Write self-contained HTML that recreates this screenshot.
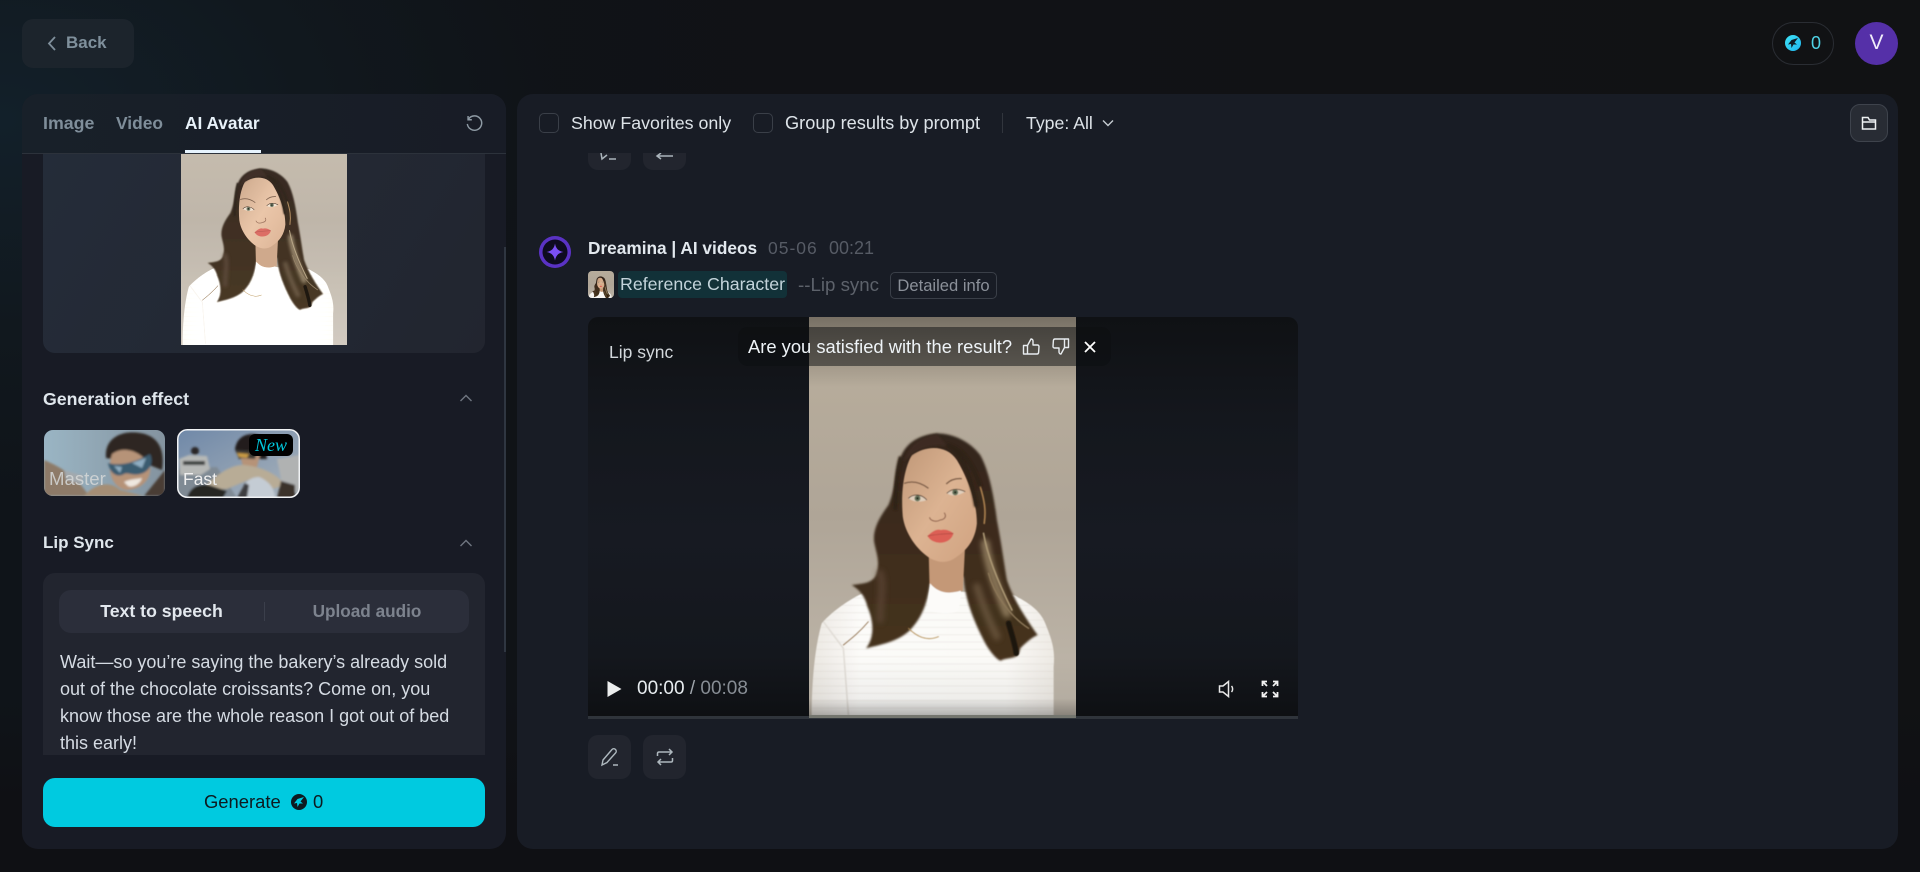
<!DOCTYPE html>
<html><head><meta charset="utf-8"><style>
*{box-sizing:border-box;margin:0;padding:0}
html,body{width:1920px;height:872px;overflow:hidden;background:#0f1014}
body{position:relative;font-family:"Liberation Sans",sans-serif;color:#e6edf2}
.a{position:absolute}
.t{position:absolute;white-space:nowrap;line-height:20px}
svg{display:block}
</style></head><body>
<svg width="0" height="0" style="position:absolute"><defs>
<linearGradient id="bgG" x1="0" y1="0" x2="0" y2="1"><stop offset="0" stop-color="#baaf9d"/><stop offset=".5" stop-color="#afa597"/><stop offset="1" stop-color="#c0b8ac"/></linearGradient>
<linearGradient id="skin" x1="0" y1="0" x2="1" y2="1"><stop offset="0" stop-color="#c09878"/><stop offset=".5" stop-color="#dcb392"/><stop offset="1" stop-color="#d0a280"/></linearGradient>
<linearGradient id="swt" x1="0" y1="0" x2="1" y2="0"><stop offset="0" stop-color="#ece8e2"/><stop offset=".2" stop-color="#fcfbf9"/><stop offset=".8" stop-color="#fbfaf7"/><stop offset="1" stop-color="#eeeae4"/></linearGradient>
<linearGradient id="hairG" x1="0" y1="0" x2="0" y2="1"><stop offset="0" stop-color="#33251b"/><stop offset=".55" stop-color="#3f2d1e"/><stop offset="1" stop-color="#46331f"/></linearGradient>
<pattern id="rib" width="10" height="22" patternUnits="userSpaceOnUse"><rect y="19" width="10" height="2" fill="#cfcac3" opacity=".4"/></pattern>
<filter id="bH"><feGaussianBlur stdDeviation="3.500"/></filter>
<filter id="bS"><feGaussianBlur stdDeviation="8"/></filter>
<filter id="bF"><feGaussianBlur stdDeviation="1.500"/></filter>
<symbol id="portrait" viewBox="87 -9 800 1200" preserveAspectRatio="none">
<rect x="87" y="-9" width="800" height="1200" fill="url(#bgG)"/>
<g filter="url(#bF)">
<path d="M125 910C160 870 220 830 260 815L445 790 540 815 700 825C740 845 780 870 795 910 815 960 825 990 820 1040V1191H95C95 1080 105 980 125 910Z" fill="url(#swt)"/>
<path d="M125 910C160 870 220 830 260 815L445 790 540 815 700 825C740 845 780 870 795 910 815 960 825 990 820 1040V1191H95C95 1080 105 980 125 910Z" fill="url(#rib)"/>
<path d="M130 905L190 985 205 1185" fill="none" stroke="#e2ded8" stroke-width="5"/>
</g>
<g filter="url(#bH)">
<path d="M470 340C420 345 380 365 362 410 345 460 345 510 325 555 300 590 278 625 282 665 288 700 300 720 290 760 280 790 250 790 215 795 240 810 255 830 262 860 280 900 285 950 258 985 300 975 350 965 385 935 420 900 440 860 450 790L550 770C555 830 570 880 610 960 630 1000 660 1030 665 1020 690 1010 715 1020 720 985 745 960 760 950 772 945 740 900 700 840 680 780 670 720 665 680 650 600 640 520 625 450 600 405 570 365 520 340 470 340Z" fill="url(#hairG)"/>
</g>
<g fill="none" stroke-linecap="round" filter="url(#bS)" opacity=".75">
<path d="M615 670C625 740 650 810 680 880" stroke="#a08c6c" stroke-width="26"/>
<path d="M590 800C605 850 625 900 650 950" stroke="#6e5a42" stroke-width="22"/>
<path d="M300 760C312 800 300 840 300 900" stroke="#5c4534" stroke-width="22"/>
</g>
<g fill="none" stroke-linecap="round" filter="url(#bF)">
<path d="M610 640C620 700 650 780 695 870" stroke="#ab9773" stroke-width="5"/>
<path d="M625 760C640 820 690 890 745 925" stroke="#8d7859" stroke-width="4"/>
<path d="M600 500C612 540 618 570 612 610" stroke="#a97f4e" stroke-width="5"/>
<path d="M685 910C695 945 705 975 708 1000" stroke="#1e130c" stroke-width="16"/>
<path d="M190 975C215 955 240 935 265 905" stroke="#8a6a46" stroke-width="2.500"/>
<path d="M385 925C410 950 440 965 475 950" stroke="#b08a50" stroke-width="2.500"/>
</g>
<g filter="url(#bF)">
<path d="M445 670L448 795C470 825 520 825 548 812L555 670Z" fill="#c49877"/>
<path d="M450 790C445 830 440 860 445 870 480 885 530 880 535 870 540 850 542 830 542 812 500 825 470 815 450 790Z" fill="#fcfbf9"/>
<path d="M395 405C440 375 500 375 530 420 560 470 590 540 590 610 585 660 560 690 530 710 505 730 480 730 450 715 410 690 375 640 368 590 362 520 370 450 395 405Z" fill="url(#skin)"/>
<path d="M372 490C395 482 420 486 445 505M498 492C510 480 525 474 545 476" fill="none" stroke="#7a5a44" stroke-width="4"/>
<path d="M385 535C400 522 425 525 440 540 420 548 400 546 385 535ZM500 520C515 508 535 508 555 515 535 528 515 530 500 520Z" fill="#e0cfbc"/>
<circle cx="412" cy="535" r="9" fill="#66745c"/><circle cx="525" cy="517" r="9" fill="#66745c"/>
<circle cx="412" cy="535" r="3.500" fill="#1f1a14"/><circle cx="525" cy="517" r="3.500" fill="#1f1a14"/>
<path d="M385 535C400 520 425 522 440 540M500 520C515 505 535 505 555 515" fill="none" stroke="#3a2a20" stroke-width="2.500"/>
<path d="M448 592C452 605 470 606 480 600 495 598 500 588 492 578" fill="none" stroke="#8a5c46" stroke-width="3"/>
<path d="M442 648C458 632 472 626 482 630 495 626 510 632 520 640 515 660 495 670 475 668 458 666 448 658 442 648Z" fill="#dc5f55"/>
<path d="M442 648C470 642 495 642 520 640" fill="none" stroke="#9a4038" stroke-width="1.500"/>
</g>
<g filter="url(#bH)">
<path d="M362 410C345 470 350 520 345 570M600 500C580 440 550 385 500 375 550 400 575 480 588 560" fill="none" stroke="#2f2118" stroke-width="12"/>
<path d="M470 342C420 350 385 375 372 425 410 385 450 372 500 378 485 360 480 350 470 342Z" fill="#3d2c21"/>
</g>
</symbol>
<linearGradient id="cy" x1="0" y1="0" x2="1" y2="1"><stop offset="0" stop-color="#3fe3f5"/><stop offset="1" stop-color="#1fb5f0"/></linearGradient>
<filter id="b1"><feGaussianBlur stdDeviation="1"/></filter>
</defs></svg>

<!-- page bg -->
<div class="a" style="inset:0;background:radial-gradient(ellipse 560px 380px at 0 120px,#12202a 0,#11181e 55%,rgba(15,16,20,0) 100%),linear-gradient(90deg,#0f1419 0,#111216 45%,#111214 100%)"></div>
<div class="a" style="left:0;top:700px;width:1920px;height:172px;background:linear-gradient(180deg,rgba(15,16,20,0),#0f1014 60%)"></div>

<!-- top -->
<div class="a" style="left:22px;top:19px;width:112px;height:49px;border-radius:11px;background:#1c242c"></div>
<svg class="a" style="left:46px;top:34px" width="12" height="18" viewBox="0 0 12 18"><path d="M9 3L3 9.500 9 16" fill="none" stroke="#7f8f9b" stroke-width="1.800"/></svg>
<div class="t" style="left:66px;top:33px;font-size:17px;font-weight:700;color:#7f909c">Back</div>

<div class="a" style="left:1772px;top:22px;width:62px;height:43px;border-radius:22px;border:1px solid #2a2d33"></div>
<svg class="a" style="left:1785px;top:35px" width="16" height="16" viewBox="0 0 16 16"><circle cx="8" cy="8" r="8" fill="url(#cy)"/><path d="M13 3L6.500 5 3 9.500 6 9 6.500 13 8.500 9.500 12 9.500 9.500 7.500Z" fill="#0f1a24"/></svg>
<div class="t" style="left:1811px;top:33px;font-size:18px;color:#4fd3e6">0</div>
<div class="a" style="left:1855px;top:22px;width:43px;height:43px;border-radius:50%;background:#5530a8"></div>
<div class="t" style="left:1855px;top:33px;width:43px;text-align:center;font-size:21px;color:#f0ecfa">V</div>

<!-- left panel -->
<div class="a" style="left:22px;top:94px;width:484px;height:755px;border-radius:16px;background:#181b25;overflow:hidden">
  <div class="a" style="left:0;top:0;width:484px;height:60px;background:linear-gradient(90deg,#182029,#181c26);border-bottom:1px solid #2c323b"></div>
</div>
<div class="t" style="left:43px;top:113px;font-size:17.800px;font-weight:700;color:#7f8e9a">Image</div>
<div class="t" style="left:116px;top:113px;font-size:17.400px;font-weight:700;color:#7f8e9a">Video</div>
<div class="t" style="left:185px;top:113px;font-size:17.300px;font-weight:700;color:#e8f2fa">AI Avatar</div>
<div class="a" style="left:185px;top:150px;width:76px;height:3px;background:#e6f3fd"></div>
<svg class="a" style="left:465px;top:114px" width="18" height="18" viewBox="0 0 20 20"><path d="M4 5.500A8 8 0 1 1 2.600 11" fill="none" stroke="#8e9aa4" stroke-width="1.600"/><path d="M3.400 2.200V6.400H7.600" fill="none" stroke="#8e9aa4" stroke-width="1.600"/></svg>

<div class="a" style="left:43px;top:154px;width:442px;height:199px;border-radius:0 0 12px 12px;background:linear-gradient(120deg,#242c39,#22252f)"></div>
<div class="a" style="left:181px;top:154px;width:166px;height:191px;overflow:hidden"><svg class="a" style="left:0;top:-58px;filter:brightness(1.1) saturate(.8)" width="166" height="249"><use href="#portrait" width="166" height="249"/></svg></div>
<div class="a" style="left:504px;top:247px;width:2px;height:405px;background:#2f3641"></div>

<div class="t" style="left:43px;top:389px;font-size:17.750px;font-weight:700;color:#dfe6ec">Generation effect</div>
<svg class="a" style="left:459px;top:392px" width="14" height="12" viewBox="0 0 14 12"><path d="M1.500 9L7 3.500 12.500 9" fill="none" stroke="#6f7680" stroke-width="1.400"/></svg>

<!-- Master thumb -->
<svg class="a" style="left:44px;top:430px;border-radius:9px" width="121" height="66" viewBox="0 0 121 66">
<defs><linearGradient id="sky1" x1="0" y1="0" x2="1" y2="0"><stop offset="0" stop-color="#9ab5c4"/><stop offset="1" stop-color="#84939f"/></linearGradient></defs>
<rect width="121" height="66" fill="url(#sky1)"/>
<g filter="url(#b1)">
<path d="M0 30C20 38 35 50 45 66H0Z" fill="#8d7a68"/><path d="M20 40L40 46 36 54 22 50Z" fill="#a3a9ad"/>
<path d="M100 66L121 40V66Z" fill="#4a3d35"/>
<path d="M62 28C60 8 78 0 96 3 115 6 121 20 118 40L108 36Z" fill="#2e2622"/>
<path d="M68 24C82 14 100 24 106 36 108 50 96 60 82 60 70 58 62 44 68 24Z" fill="#b69378"/>
<path d="M64 33C75 36 88 34 106 24 110 32 106 42 96 44 88 46 84 42 80 44 74 48 66 44 64 33Z" fill="#3b5b70"/>
<path d="M70 36L78 37 76 43ZM88 33L102 28 98 38Z" fill="#90aec2"/>
<path d="M80 52C86 49 94 49 98 48 96 55 88 58 84 56Z" fill="#efe8e0"/>
<path d="M40 66C50 54 66 50 76 60L100 66Z" fill="#a58e74"/>
</g></svg>
<div class="t" style="left:49px;top:469px;font-size:18.600px;color:#d6d8d8;opacity:.85">Master</div>

<!-- Fast thumb -->
<svg class="a" style="left:177px;top:429px" width="123" height="69" viewBox="0 0 123 69">
<defs><clipPath id="cf"><rect x="1" y="1" width="121" height="67" rx="9"/></clipPath><linearGradient id="sky2" x1="0" y1="0" x2="1" y2="1"><stop offset="0" stop-color="#6f88a8"/><stop offset="1" stop-color="#a9b3bb"/></linearGradient></defs>
<g clip-path="url(#cf)"><rect width="123" height="69" fill="url(#sky2)"/>
<g filter="url(#b1)">
<path d="M0 40L40 38 60 69H0Z" fill="#7f8a94"/><path d="M100 30L123 26V60L108 69Z" fill="#b0b2b2"/>
<path d="M2 30L12 26 30 27 33 40 24 46H3Z" fill="#b6b8b6"/><path d="M6 32H28V36H6Z" fill="#3a3c3e"/><circle cx="18" cy="22" r="4" fill="#2a2826"/>
<path d="M58 20C60 5 75 2 86 8L90 30 62 30Z" fill="#241e1a"/>
<path d="M62 22H84L80 38H66Z" fill="#b69378"/><path d="M58 21L80 22 78 30 62 29Z" fill="#3d3a34"/><path d="M60 24L72 25 70 29 62 28Z" fill="#c99b45"/>
<path d="M25 60C40 45 55 35 68 36 85 38 100 45 108 56L95 60 74 50 50 60Z" fill="#b8ac96"/>
<path d="M62 69C64 56 72 48 82 48 92 52 98 60 98 69Z" fill="#c4ccd4"/>
<path d="M10 69C12 60 20 54 32 56L50 62 46 69Z" fill="#282624"/><path d="M100 69L104 52 118 56 118 69Z" fill="#3a322c"/>
<path d="M60 69L68 54 72 56 70 69Z" fill="#3e3e40"/>
</g></g>
<rect x=".75" y=".75" width="121.500" height="67.500" rx="9.500" fill="none" stroke="#f0f2f4" stroke-width="1.500"/>
</svg>
<div class="a" style="left:249px;top:434px;width:44px;height:22px;border-radius:6px;background:#000"></div>
<div class="t" style="left:249px;top:435px;width:44px;text-align:center;font-family:'Liberation Serif',serif;font-style:italic;font-size:18px;color:#00c7dc">New</div>
<div class="t" style="left:183px;top:469px;font-size:17.500px;color:#f0f0f0">Fast</div>

<div class="t" style="left:43px;top:533px;font-size:17px;font-weight:700;color:#dfe6ec">Lip Sync</div>
<svg class="a" style="left:459px;top:537px" width="14" height="12" viewBox="0 0 14 12"><path d="M1.500 9L7 3.500 12.500 9" fill="none" stroke="#6f7680" stroke-width="1.400"/></svg>

<div class="a" style="left:43px;top:573px;width:442px;height:182px;border-radius:12px 12px 0 0;background:#22252f"></div>
<div class="a" style="left:59px;top:590px;width:410px;height:43px;border-radius:12px;background:#2b2e3a"></div>
<div class="a" style="left:264px;top:602px;width:1px;height:19px;background:#3b3f4b"></div>
<div class="t" style="left:59px;top:601px;width:205px;text-align:center;font-size:17.700px;font-weight:700;color:#e3e8ee">Text to speech</div>
<div class="t" style="left:265px;top:601px;width:204px;text-align:center;font-size:17.200px;font-weight:700;color:#7d838e">Upload audio</div>
<div class="t" style="left:60px;top:649px;font-size:18px;line-height:27px;color:#d5dbe3;white-space:nowrap">Wait—so you’re saying the bakery’s already sold<br>out of the chocolate croissants? Come on, you<br>know those are the whole reason I got out of bed<br>this early!</div>

<div class="a" style="left:43px;top:778px;width:442px;height:49px;border-radius:12px;background:#00cae0"></div>
<div class="t" style="left:204px;top:792px;font-size:18.400px;color:#0d1a20">Generate</div>
<svg class="a" style="left:291px;top:794px" width="16" height="16" viewBox="0 0 16 16"><circle cx="8" cy="8" r="8" fill="#0d1a20"/><path d="M13 3L6.500 5 3 9.500 6 9 6.500 13 8.500 9.500 12 9.500 9.500 7.500Z" fill="#00cae0"/></svg>
<div class="t" style="left:313px;top:792px;font-size:18.400px;color:#0d1a20">0</div>

<!-- right panel -->
<div class="a" style="left:517px;top:94px;width:1381px;height:755px;border-radius:16px;background:#181c25"></div>
<div class="a" style="left:588px;top:153px;width:43px;height:17px;border-radius:0 0 10px 10px;background:#22252e"></div>
<div class="a" style="left:643px;top:153px;width:43px;height:17px;border-radius:0 0 10px 10px;background:#22252e"></div>
<svg class="a" style="left:600px;top:153px" width="20" height="8" viewBox="0 0 20 8"><path d="M1 0L2 6 7 2M9 6H16" fill="none" stroke="#aab4bb" stroke-width="1.500"/></svg>
<svg class="a" style="left:655px;top:153px" width="20" height="8" viewBox="0 0 20 8"><path d="M6 0L2 3 6 6M2 3H18" fill="none" stroke="#aab4bb" stroke-width="1.500"/></svg>

<div class="a" style="left:539px;top:113px;width:20px;height:20px;border:1px solid #3a3f48;border-radius:5px"></div>
<div class="t" style="left:571px;top:113px;font-size:17.800px;color:#dde3e8">Show Favorites only</div>
<div class="a" style="left:753px;top:113px;width:20px;height:20px;border:1px solid #3a3f48;border-radius:5px"></div>
<div class="t" style="left:785px;top:113px;font-size:18.200px;color:#dde3e8">Group results by prompt</div>
<div class="a" style="left:1002px;top:113px;width:1px;height:20px;background:#31353d"></div>
<div class="t" style="left:1026px;top:113px;font-size:17.700px;color:#dde3e8">Type: All</div>
<svg class="a" style="left:1101px;top:118px" width="14" height="10" viewBox="0 0 14 10"><path d="M2 2.500L7 7.500 12 2.500" fill="none" stroke="#c5ccd2" stroke-width="1.400"/></svg>

<div class="a" style="left:1850px;top:104px;width:38px;height:38px;border-radius:10px;background:#282c34;border:1px solid #3e434c"></div>
<svg class="a" style="left:1860px;top:114px" width="18" height="18" viewBox="0 0 18 18"><path d="M2.500 15V3.500H8L9.500 6H15.500V15ZM2.500 8H15.500" fill="none" stroke="#eef1f3" stroke-width="1.500"/></svg>

<!-- message -->
<svg class="a" style="left:539px;top:236px" width="32" height="32" viewBox="0 0 32 32"><circle cx="16" cy="16" r="16" fill="#5a32c4"/><circle cx="16" cy="16" r="12.500" fill="#0e0b20"/><path d="M16 7.500C16.800 12.500 19.500 15.200 24.500 16 19.500 16.800 16.800 19.500 16 24.500 15.200 19.500 12.500 16.800 7.500 16 12.500 15.200 15.200 12.500 16 7.500Z" fill="#7b4ff5"/></svg>
<div class="t" style="left:588px;top:238px;font-size:17.250px;font-weight:700;color:#e2e8ee">Dreamina | AI videos</div>
<div class="t" style="left:768px;top:238px;font-size:17.500px;letter-spacing:1px;color:#565b65">05-06</div>
<div class="t" style="left:829px;top:238px;font-size:18px;color:#565b65">00:21</div>

<div class="a" style="left:588px;top:271px;width:26px;height:27px;border-radius:4px;overflow:hidden"><svg width="26" height="39" style="margin-top:-6px"><use href="#portrait" width="26" height="39"/></svg></div>
<div class="a" style="left:618px;top:271px;width:169px;height:27px;border-radius:4px;background:#123138"></div>
<div class="t" style="left:620px;top:274px;font-size:17.800px;color:#c3d3da">Reference Character</div>
<div class="t" style="left:798px;top:275px;font-size:18.700px;color:#5d626b">--Lip sync</div>
<div class="a" style="left:890px;top:272px;width:107px;height:27px;border:1px solid #3a3f48;border-radius:5px"></div>
<div class="t" style="left:890px;top:276px;width:107px;text-align:center;font-size:16.600px;color:#8b9099">Detailed info</div>

<!-- video -->
<div class="a" style="left:588px;top:317px;width:710px;height:399px;border-radius:10px 10px 0 0;overflow:hidden;background:linear-gradient(180deg,#0f1114 0,#14171d 25%,#171a22 55%,#14171d 85%,#0e1013 100%)">
  <svg class="a" style="left:221px;top:0" width="267" height="400"><use href="#portrait" width="267" height="400"/></svg>
  <div class="a" style="left:221px;top:0;width:267px;height:70px;background:linear-gradient(180deg,rgba(0,0,0,.36),rgba(0,0,0,0))"></div>
  <div class="a" style="left:221px;top:340px;width:267px;height:59px;background:linear-gradient(180deg,rgba(0,0,0,0) 0,rgba(0,0,0,.05) 70%,rgba(0,0,0,.3) 100%)"></div>
</div>
<div class="a" style="left:588px;top:716px;width:710px;height:3px;background:#2f343b"></div>
<div class="a" style="left:809px;top:715px;width:267px;height:3px;background:#74766f"></div>

<div class="t" style="left:609px;top:342px;font-size:17.500px;color:#d3d8dc">Lip sync</div>
<div class="a" style="left:738px;top:327px;width:373px;height:39px;border-radius:10px;background:rgba(12,13,16,.5)"></div>
<div class="t" style="left:748px;top:337px;font-size:18.350px;color:#eef3f7">Are you satisfied with the result?</div>
<svg class="a" style="left:1022px;top:337px" width="18" height="20" viewBox="0 0 18 20"><path d="M5.500 8.500V17H15C16 17 16.500 16.300 16.600 15.500L17 9.500C17 8.700 16.400 8 15.500 8H11V4C11 2.500 9.800 2 9 2L5.500 8.500ZM1.500 8.500H5.500V17H1.500Z" fill="none" stroke="#e8ecef" stroke-width="1.400" stroke-linejoin="round"/></svg>
<svg class="a" style="left:1052px;top:336px" width="18" height="20" viewBox="0 0 18 20"><path d="M12.500 11.500V3H3C2 3 1.500 3.700 1.400 4.500L1 10.500C1 11.300 1.600 12 2.500 12H7V16C7 17.500 8.200 18 9 18L12.500 11.500ZM16.500 11.500H12.500V3H16.500Z" fill="none" stroke="#e8ecef" stroke-width="1.400" stroke-linejoin="round"/></svg>
<svg class="a" style="left:1083px;top:340px" width="14" height="14" viewBox="0 0 14 14"><path d="M2 2L12 12M12 2L2 12" stroke="#fff" stroke-width="1.800"/></svg>

<svg class="a" style="left:607px;top:680px" width="15" height="18" viewBox="0 0 15 18"><path d="M0.500 1V17L14.500 9Z" fill="#eceeee"/></svg>
<div class="t" style="left:637px;top:679px;font-size:19px;color:#e8edf0">00:00 <span style="color:#a0a6ac">/</span> <span style="color:#878d94">00:08</span></div>
<svg class="a" style="left:1218px;top:680px" width="20" height="18" viewBox="0 0 20 18"><path d="M1.500 6H5L10.500 1.500V16.500L5 12H1.500ZM13.500 6C15 7.500 15 10.500 13.500 12" fill="none" stroke="#e8e8e8" stroke-width="1.500"/></svg>
<svg class="a" style="left:1261px;top:680px" width="18" height="18" viewBox="0 0 18 18"><path d="M1.500 6V1.500H6M2 2L6 6M12 1.500H16.500V6M16 2L12 6M1.500 12V16.500H6M2 16L6 12M16.500 12V16.500H12M16 16L12 12" fill="none" stroke="#f2f2f2" stroke-width="1.800"/></svg>

<div class="a" style="left:588px;top:735px;width:43px;height:44px;border-radius:10px;background:#22252e"></div>
<svg class="a" style="left:600px;top:747px" width="20" height="20" viewBox="0 0 20 20"><path d="M2 18L3 13 12 2.500C13 1.500 14.500 1.500 15.500 2.500 16.500 3.500 16.500 5 15.500 6L7 15.500ZM13 18H18" fill="none" stroke="#aeb8be" stroke-width="1.400"/></svg>
<div class="a" style="left:643px;top:735px;width:43px;height:44px;border-radius:10px;background:#22252e"></div>
<svg class="a" style="left:655px;top:747px" width="20" height="20" viewBox="0 0 20 20"><path d="M2.500 9V6.500C2.500 5.500 3.200 5 4 5H17M14 2L17 5 14 8M17.500 11V13.500C17.500 14.500 16.800 15 16 15H3M6 12L3 15 6 18" fill="none" stroke="#aeb8be" stroke-width="1.500"/></svg>
</body></html>
